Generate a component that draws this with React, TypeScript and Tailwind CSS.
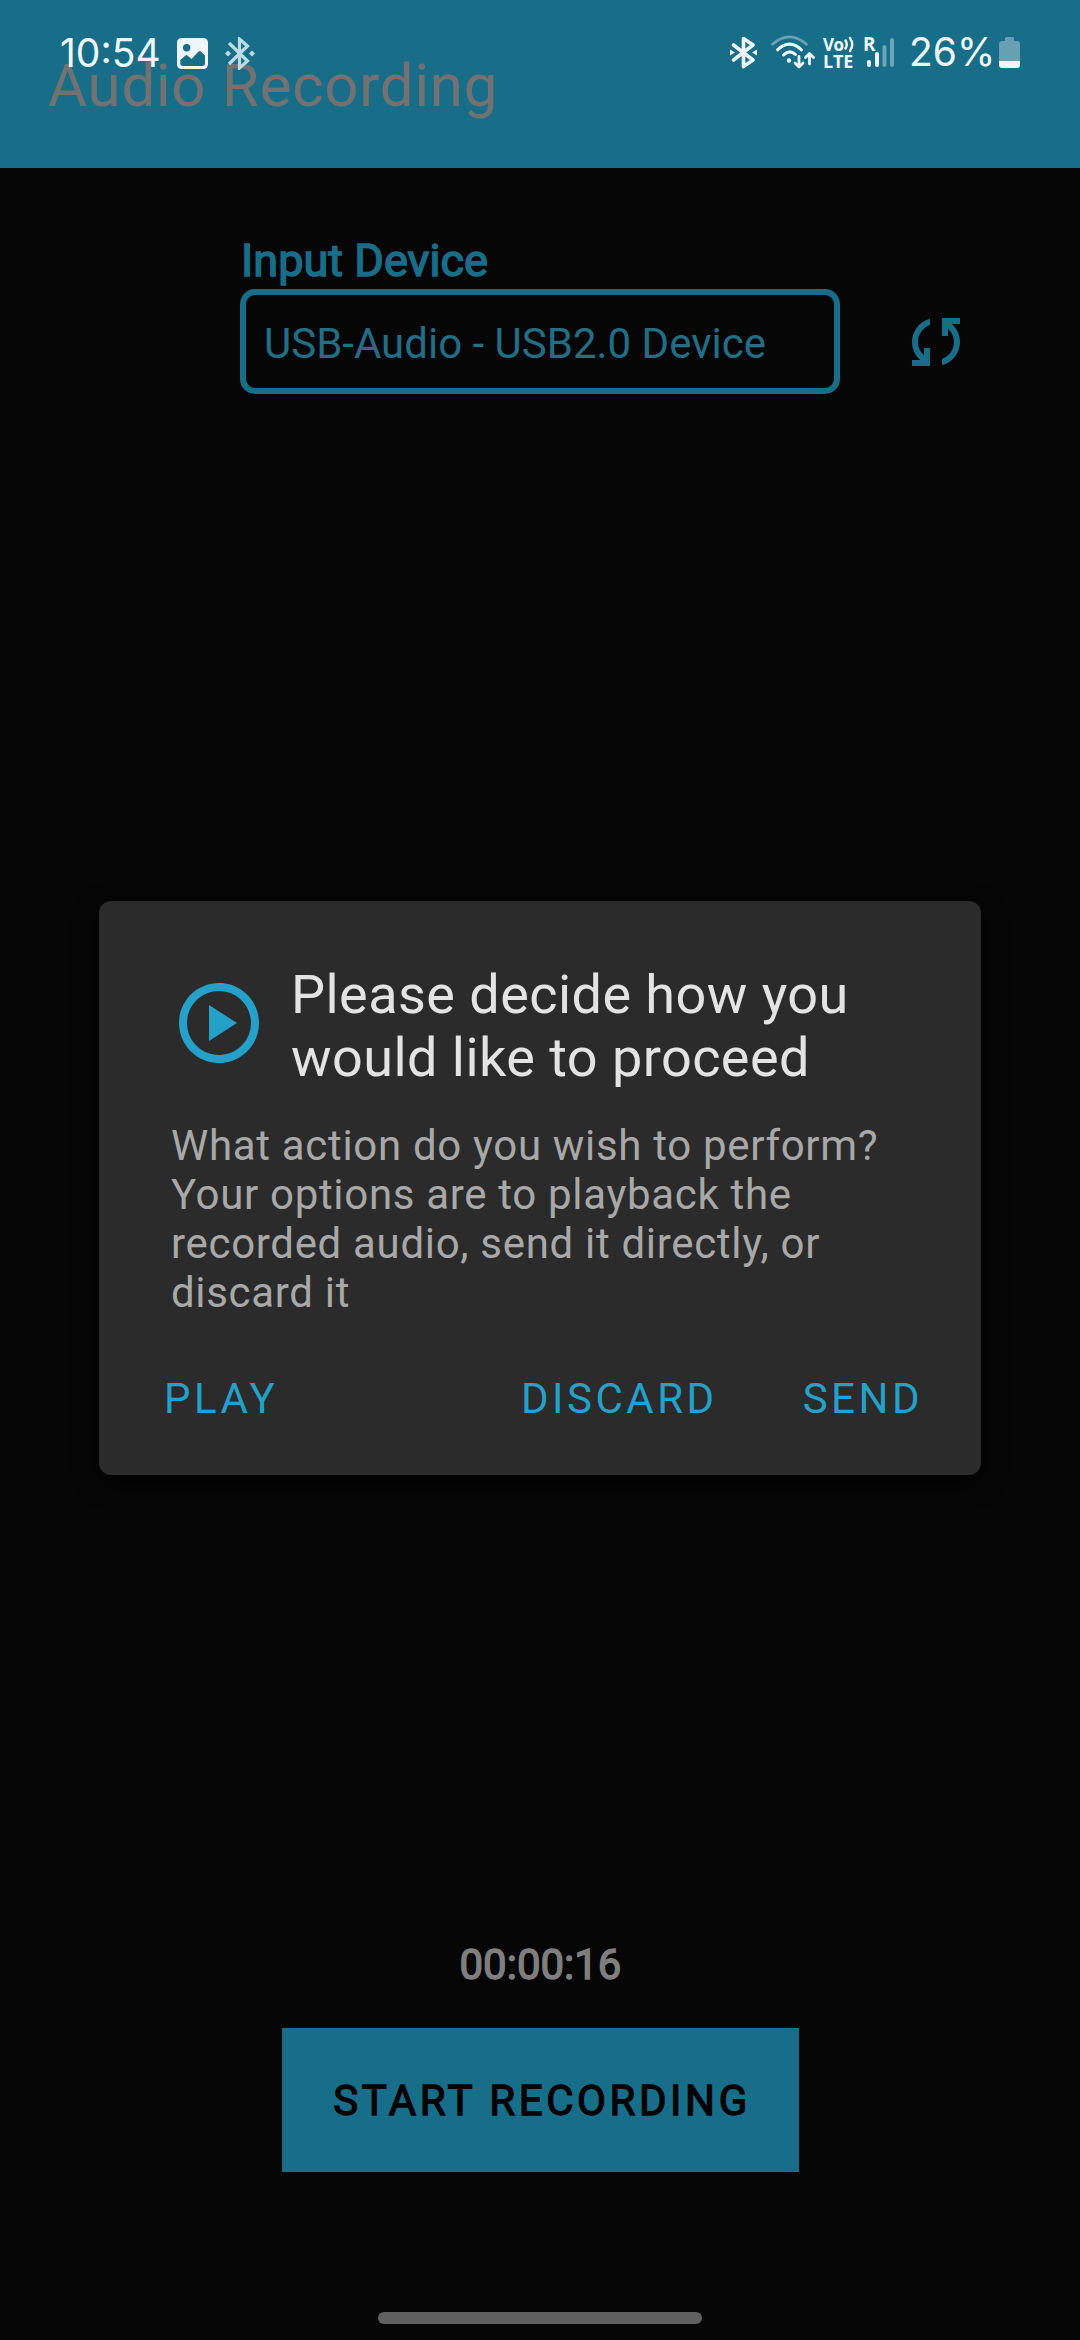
import type { ReactNode } from "react";

function ImageIcon() {
  return (
    <svg className="ml-[17px] h-[31px] w-[31px]" viewBox="0 0 31 31">
      <path
        fillRule="evenodd"
        fill="#eef6fa"
        d="M5 0H26Q31 0 31 5V26Q31 31 26 31H5Q0 31 0 26V5Q0 0 5 0ZM9.700 6A3.700 3.700 0 1 0 9.700 13.400A3.700 3.700 0 1 0 9.700 6ZM3.300 22V25.500Q3.300 28 6 28H25Q28 28 28 25.500V17.500L23.500 13.200Q22.500 12.700 21.600 13.500L14.500 21L10.400 17.400Q9.500 16.800 8.600 17.400Z"
      />
    </svg>
  );
}

function NotificationBluetooth() {
  return (
    <svg className="ml-[17px] h-[33px] w-[30px]" viewBox="0 0 30 33">
      <g fill="none" stroke="#bfdae4" strokeWidth="3.200">
        <path d="M4 6L22.500 24L14.500 31V2L22.500 9L4 27" strokeLinejoin="miter" />
      </g>
      <path fill="#bfdae4" d="M3 13.500L6 16.500L3 19.500L0 16.500ZM27 13.500L30 16.500L27 19.500L24 16.500Z" />
    </svg>
  );
}

function StatusBluetooth() {
  return (
    <svg className="h-[33px] w-[27px]" viewBox="0 0 27 33">
      <path
        d="M3.500 9L23 24L13.500 30.500V2.500L23 9L3.500 24"
        fill="none"
        stroke="#eef8fc"
        strokeWidth="3.600"
        strokeLinejoin="round"
        strokeLinecap="round"
      />
      <path fill="#eef8fc" d="M0 13.500L5 16.500L0 19.500ZM27 13.500L22 16.500L27 19.500Z" />
    </svg>
  );
}

function WifiIcon() {
  return (
    <svg className="ml-[14px] h-[34px] w-[44px]" viewBox="0 0 44 34" fill="none" strokeLinecap="round">
      <path d="M1.500 9.200Q18.500 -5.500 35.500 9.200" stroke="#6ba4b8" strokeWidth="2.800" />
      <path d="M6.500 14.800Q18.500 3.500 30.500 14.800" stroke="#eef8fc" strokeWidth="3" />
      <path d="M12.500 20Q18.500 14 24.500 19.500" stroke="#eef8fc" strokeWidth="3" />
      <circle cx="18" cy="25.500" r="2.200" fill="#eef8fc" />
      <g stroke="#eef8fc" strokeWidth="2.800" strokeLinejoin="round">
        <path d="M28 21.500V31.500M24 28L28 32L32 28" />
        <path d="M38.500 29V19M34.500 22.500L38.500 18.500L42.500 22.500" />
      </g>
    </svg>
  );
}

function VolteIcon() {
  return (
    <div className="ml-[8px] flex h-[33px] w-[32px] flex-col font-['Open_Sans',sans-serif] font-bold text-[#eef8fc]">
      <div className="flex h-[17px] items-center">
        <span className="w-[20px] text-[17px] leading-[17px] tracking-[-0.5px]">Vo</span>
        <svg className="h-[17px] w-[12px]" viewBox="0 0 12 17" fill="none" stroke="#eef8fc" strokeWidth="2.400" strokeLinecap="round">
          <path d="M2.500 4.500Q5 8.500 2.500 12.500M7 2Q11.500 8.500 7 15" />
        </svg>
      </div>
      <span className="text-[18px] leading-[16px] tracking-[-0.2px]">LTE</span>
    </div>
  );
}

function SignalIcon() {
  return (
    <div className="relative ml-[9px] h-[31px] w-[31px]">
      <span className="absolute top-0 left-[-1px] font-['Open_Sans',sans-serif] text-[19px] leading-[15px] font-bold text-[#eef8fc]">R</span>
      <svg className="h-[31px] w-[31px]" viewBox="0 0 31 31">
        <rect x="3" y="23" width="4" height="7" rx="2" fill="#eef8fc" />
        <rect x="11" y="15" width="4" height="15" rx="2" fill="#eef8fc" />
        <rect x="18.500" y="8" width="4" height="22" rx="2" fill="#6ba4b8" />
        <rect x="26" y="1" width="4" height="29" rx="2" fill="#6ba4b8" />
      </svg>
    </div>
  );
}

function BatteryIcon() {
  return (
    <svg className="ml-[7px] h-[31px] w-[21px]" viewBox="0 0 21 31">
      <path d="M6 1.500Q6 0 7.500 0H13.500Q15 0 15 1.500V4H18Q21 4 21 7V24H0V7Q0 4 3 4H6Z" fill="#689fb3" />
      <path d="M0 24H21V28Q21 31 18 31H3Q0 31 0 28Z" fill="#eef8fc" />
    </svg>
  );
}

function StatusBar() {
  return (
    <div className="absolute inset-x-0 top-0 flex h-[106px] items-center justify-between pr-[60px] pl-[60px]">
      <div className="flex items-center">
        <span className="w-[100px] font-['Inter',sans-serif] text-[39px] leading-[40px] whitespace-nowrap text-[#eef8fc]">10:54</span>
        <ImageIcon />
        <NotificationBluetooth />
      </div>
      <div className="mb-[2px] flex items-center">
        <StatusBluetooth />
        <WifiIcon />
        <VolteIcon />
        <SignalIcon />
        <span className="ml-[14px] w-[83px] font-['Inter',sans-serif] text-[39px] leading-[40px] whitespace-nowrap text-[#eef8fc]">26%</span>
        <BatteryIcon />
      </div>
    </div>
  );
}

function DialogButton({ children }: { children: ReactNode }) {
  return <button className="text-[42px] leading-[50px] tracking-[3.5px] text-[#25a1c9]">{children}</button>;
}

function Dialog() {
  return (
    <div className="absolute top-[901px] left-[99px] flex h-[574px] w-[882px] flex-col rounded-[12px] bg-[#2b2b2b] shadow-[0_8px_24px_#000000b0]">
      <div className="mt-[62px] ml-[72px] flex items-center">
        <svg className="mb-[6px] h-[96px] w-[96px]" viewBox="0 0 24 24" fill="#25a1c9">
          <path d="M9.500 16.500l7-4.500-7-4.500v9zM12 2C6.480 2 2 6.480 2 12s4.480 10 10 10 10-4.480 10-10S17.520 2 12 2zm0 18c-4.410 0-8-3.590-8-8s3.590-8 8-8 8 3.590 8 8-3.590 8-8 8z" />
        </svg>
        <h2 className="ml-[24px] text-[54px] leading-[63px] tracking-[0.45px] whitespace-nowrap text-[#e3e3e3]">
          Please decide how you
          <br />
          would like to proceed
        </h2>
      </div>
      <p className="mt-[32px] ml-[72px] text-[42px] leading-[49px] tracking-[0.68px] whitespace-nowrap text-[#a8a8a8]">
        What action do you wish to perform?
        <br />
        Your options are to playback the
        <br />
        recorded audio, send it directly, or
        <br />
        discard it
      </p>
      <div className="mt-[57px] flex justify-between pr-[58px] pl-[65px]">
        <DialogButton>PLAY</DialogButton>
        <div className="flex gap-[85px]">
          <DialogButton>DISCARD</DialogButton>
          <DialogButton>SEND</DialogButton>
        </div>
      </div>
    </div>
  );
}

export default function App() {
  return (
    <div className="relative flex h-[2340px] w-[1080px] flex-col overflow-hidden bg-[#060606] font-['Roboto',sans-serif]">
      <header className="h-[168px] bg-[#186e88] pt-[51px] pl-[48px]">
        <h1 className="text-[60px] leading-[70px] tracking-[0.75px] text-[#727272]">Audio Recording</h1>
      </header>
      <StatusBar />

      <main className="flex flex-1 flex-col">
        <section className="mt-[66px] flex items-end pl-[240px]">
          <div className="w-[600px]">
            <div className="mb-[1px] pl-[1px] text-[45px] leading-[54px] tracking-[0.05px] text-[#186e88] [-webkit-text-stroke:1.5px_#186e88]">
              Input Device
            </div>
            <div className="flex h-[105px] items-center rounded-[15px] border-[6px] border-[#186e88] pt-[4px] pl-[18px] text-[42px] text-[#226e87]">
              USB-Audio - USB2.0 Device
            </div>
          </div>
          <svg className="mb-[16px] ml-[60px] h-[72px] w-[72px]" viewBox="0 0 24 24" fill="#186e88">
            <path d="M10 4.260v2.090C7.670 7.180 6 9.390 6 12c0 1.770.78 3.340 2 4.440V14h2v6H4v-2h2.730C5.060 16.540 4 14.400 4 12c0-3.730 2.550-6.850 6-7.740zM20 4h-6v6h2V7.560c1.220 1.100 2 2.670 2 4.440 0 2.610-1.670 4.820-4 5.650v2.090c3.450-.89 6-4.010 6-7.740 0-2.400-1.060-4.540-2.730-6H20V4z" />
          </svg>
        </section>

        <section className="mt-auto flex flex-col items-center">
          <div className="pl-[1px] text-[42px] leading-[50px] text-[#7f7f7f] [-webkit-text-stroke:1.4px_#7f7f7f]">00:00:16</div>
          <button className="mt-[38px] h-[144px] w-[517px] bg-[#186e88] pl-[4px] text-[42px] tracking-[3.57px] text-black [-webkit-text-stroke:1.3px_#000000]">
            START RECORDING
          </button>
          <div className="mt-[140px] mb-[16px] h-[12px] w-[324px] rounded-full bg-[#606060]" />
        </section>
      </main>

      <Dialog />
    </div>
  );
}
